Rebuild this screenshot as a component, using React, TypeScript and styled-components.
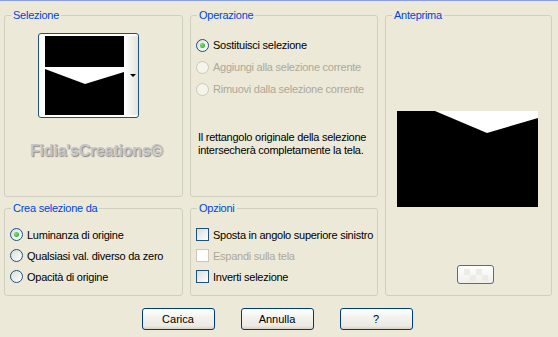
import React from 'react'
import styled, { createGlobalStyle } from 'styled-components'

const GlobalStyle = createGlobalStyle`
  html, body {
    margin: 0;
    padding: 0;
    background: #ece9d8;
  }
  body {
    font-family: 'Liberation Sans', Arial, sans-serif;
    font-size: 11px;
    letter-spacing: -0.25px;
    color: #000;
  }
`

const Dialog = styled.div`
  width: 558px;
  height: 337px;
  box-sizing: border-box;
  border-top: 1px solid #8c9fe5;
  background: #ece9d8;
  padding: 8px 6px 0 4px;
`

const Panels = styled.div`
  display: grid;
  grid-template-columns: 179px 188px 167px;
  grid-template-rows: 188px 94px;
  column-gap: 7px;
  row-gap: 5px;
`

const Group = styled.fieldset<{ $tall?: boolean }>`
  margin: 0;
  padding: 0;
  min-width: 0;
  border: 1px solid #d0d0bf;
  border-radius: 3px;
  box-sizing: border-box;
  ${p => p.$tall && 'grid-row: 1 / span 2; grid-column: 3;'}
`

const Legend = styled.legend`
  margin-left: 6px;
  padding: 0 2px;
  line-height: 13px;
  color: #0046d5;
`

const Body = styled.div<{ $pt: number; $pl: number }>`
  padding-top: ${p => p.$pt}px;
  padding-left: ${p => p.$pl}px;
  display: flex;
  flex-direction: column;
  align-items: flex-start;
`

const ThumbButton = styled.div`
  margin-left: 33px;
  display: flex;
  width: 101px;
  height: 85px;
  box-sizing: border-box;
  border: 1px solid #1c5180;
  border-radius: 3px;
  background: #fff;
  padding: 2px 0 2px 6px;
`

const DropStrip = styled.div`
  width: 14px;
  display: flex;
  align-items: center;
  justify-content: center;
  background: linear-gradient(90deg, #ffffff, #e4e3dc);
  border-radius: 0 2px 2px 0;
`

const Arrow = styled.span`
  width: 0;
  height: 0;
  margin-left: 4px;
  border-left: 3px solid transparent;
  border-right: 3px solid transparent;
  border-top: 3px solid #000;
`

const Watermark = styled.div`
  margin: 24px 0 0 25px;
  font-size: 16px;
  line-height: 18px;
  font-weight: bold;
  color: #c4c4c4;
  text-shadow: 1px 1px 1px #8a8a8a;
  letter-spacing: -0.2px;
`

const Row = styled.div<{ $h?: number }>`
  display: flex;
  align-items: center;
  height: ${p => p.$h ?? 21}px;
  gap: 4px;
`

const Label = styled.span<{ $disabled?: boolean }>`
  color: ${p => (p.$disabled ? '#aca899' : '#000')};
  white-space: nowrap;
`

const RadioCircle = styled.span<{ $disabled?: boolean }>`
  width: 13px;
  height: 13px;
  box-sizing: border-box;
  border-radius: 50%;
  border: 1px solid ${p => (p.$disabled ? '#cac8bb' : '#1c5180')};
  background: ${p =>
    p.$disabled ? '#f5f4ea' : 'linear-gradient(135deg, #dcdcd7, #ffffff)'};
  display: flex;
  align-items: center;
  justify-content: center;
  flex: none;
`

const Dot = styled.span`
  width: 5px;
  height: 5px;
  border-radius: 50%;
  background: radial-gradient(circle at 35% 35%, #7fe07f, #21a121);
`

const CheckBox = styled.span<{ $disabled?: boolean }>`
  width: 13px;
  height: 13px;
  box-sizing: border-box;
  border: 1px solid ${p => (p.$disabled ? '#cac8bb' : '#1c5180')};
  background: ${p =>
    p.$disabled ? '#ffffff' : 'linear-gradient(135deg, #dcdcd7, #ffffff)'};
  flex: none;
`

const Note = styled.p`
  margin: 31px 0 0 2px;
  line-height: 13px;
`

const Preview = styled.div`
  margin: 89px 0 0 11px;
  width: 141px;
  height: 96px;
`

const SmallButton = styled.div`
  margin: 58px 0 0 71px;
  width: 37px;
  height: 19px;
  box-sizing: border-box;
  border: 1px solid #4a6f98;
  border-radius: 3px;
  background: linear-gradient(#ffffff, #f0efea);
  display: flex;
  align-items: center;
  justify-content: center;
`

const Buttons = styled.div`
  display: flex;
  justify-content: center;
  gap: 26px;
  margin-top: 12px;
  padding-right: 2px;
`

const Button = styled.button`
  width: 73px;
  height: 22px;
  box-sizing: border-box;
  border: 1px solid #003c74;
  border-radius: 3px;
  background: linear-gradient(#ffffff, #f3f2ee 40%, #eceae2 85%, #d6d0c5);
  font-family: inherit;
  font-size: 11px;
  color: #000;
  padding: 0;
`

const Radio = ({ label, checked, disabled }: { label: string; checked?: boolean; disabled?: boolean }) => (
  <>
    <RadioCircle $disabled={disabled}>{checked && <Dot />}</RadioCircle>
    <Label $disabled={disabled}>{label}</Label>
  </>
)

const Check = ({ label, disabled }: { label: string; disabled?: boolean }) => (
  <>
    <CheckBox $disabled={disabled} />
    <Label $disabled={disabled}>{label}</Label>
  </>
)

export default function App() {
  return (
    <>
      <GlobalStyle />
      <Dialog>
        <Panels>
          <Group>
            <Legend>Selezione</Legend>
            <Body $pt={11} $pl={0}>
              <ThumbButton>
                <svg width="79" height="79" viewBox="0 0 79 79">
                  <rect width="79" height="79" fill="#000" />
                  <polygon points="0,31 79,31 79,36 40,48 0,33" fill="#fff" />
                </svg>
                <DropStrip>
                  <Arrow />
                </DropStrip>
              </ThumbButton>
              <Watermark>Fidia'sCreations©</Watermark>
            </Body>
          </Group>

          <Group>
            <Legend>Operazione</Legend>
            <Body $pt={12} $pl={5}>
              <Row $h={22}>
                <Radio label="Sostituisci selezione" checked />
              </Row>
              <Row $h={22}>
                <Radio label="Aggiungi alla selezione corrente" disabled />
              </Row>
              <Row $h={22}>
                <Radio label="Rimuovi dalla selezione corrente" disabled />
              </Row>
              <Note>
                Il rettangolo originale della selezione
                <br />
                intersecherà completamente la tela.
              </Note>
            </Body>
          </Group>

          <Group $tall>
            <Legend>Anteprima</Legend>
            <Body $pt={0} $pl={0}>
              <Preview>
                <svg width="141" height="96" viewBox="0 0 141 96">
                  <rect width="141" height="96" fill="#000" />
                  <polygon points="38,0 141,0 141,7 90,22" fill="#fff" />
                </svg>
              </Preview>
              <SmallButton>
                <svg width="24" height="12" viewBox="0 0 24 12">
                  <rect x="0" y="0" width="6" height="6" fill="#ecebe6" />
                  <rect x="12" y="0" width="6" height="6" fill="#ecebe6" />
                  <rect x="6" y="6" width="6" height="6" fill="#ecebe6" />
                  <rect x="18" y="6" width="6" height="6" fill="#ecebe6" />
                </svg>
              </SmallButton>
            </Body>
          </Group>

          <Group>
            <Legend>Crea selezione da</Legend>
            <Body $pt={9} $pl={5}>
              <Row>
                <Radio label="Luminanza di origine" checked />
              </Row>
              <Row>
                <Radio label="Qualsiasi val. diverso da zero" />
              </Row>
              <Row>
                <Radio label="Opacità di origine" />
              </Row>
            </Body>
          </Group>

          <Group>
            <Legend>Opzioni</Legend>
            <Body $pt={9} $pl={5}>
              <Row>
                <Check label="Sposta in angolo superiore sinistro" />
              </Row>
              <Row>
                <Check label="Espandi sulla tela" disabled />
              </Row>
              <Row>
                <Check label="Inverti selezione" />
              </Row>
            </Body>
          </Group>
        </Panels>

        <Buttons>
          <Button>Carica</Button>
          <Button>Annulla</Button>
          <Button>?</Button>
        </Buttons>
      </Dialog>
    </>
  )
}
